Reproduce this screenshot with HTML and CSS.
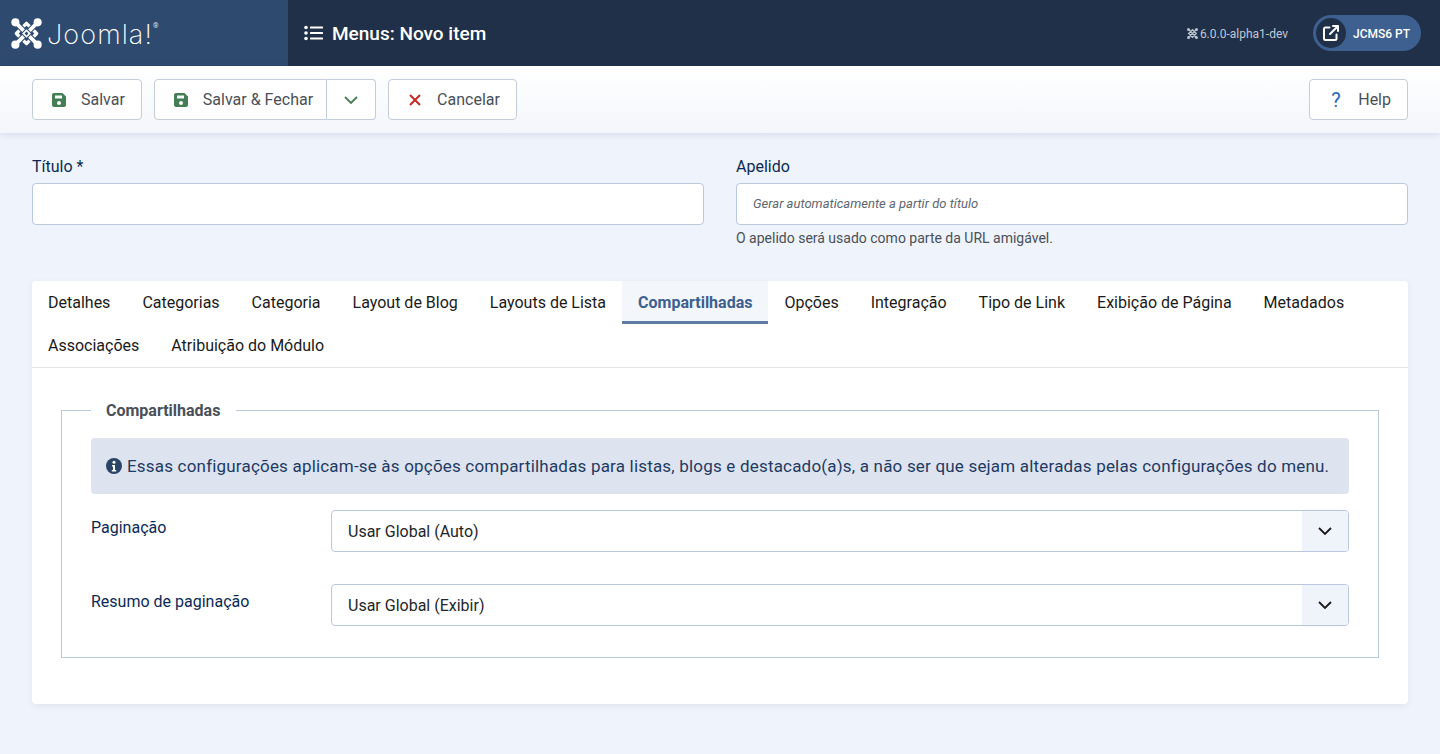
FILE: index.html
```html
<!DOCTYPE html>
<html lang="pt">
<head>
<meta charset="utf-8">
<title>Menus: Novo item</title>
<link rel="stylesheet" href="styles.css">
</head>
<body>
<header class="topbar">
  <div class="brand">
    <svg class="brand-mark" viewBox="0 0 32 32" width="31" height="31" aria-hidden="true">
      <g fill="none">
        <path class="hook" d="M16 5.500L26.500 16L16 26.500L5.500 16Z"/>
        <path class="case" d="M8 8L13 13M24 8L19 13M8 24L13 19M24 24L19 19"/>
        <path class="hook-butt" d="M4.500 4.500L13 13M27.500 4.500L19 13M4.500 27.500L13 19M27.500 27.500L19 19"/>
      </g>
      <g fill="#fff"><circle cx="4.500" cy="4.500" r="4.200"/><circle cx="27.500" cy="4.500" r="4.200"/><circle cx="4.500" cy="27.500" r="4.200"/><circle cx="27.500" cy="27.500" r="4.200"/><path d="M16 11.500L20.500 16L16 20.500L11.500 16Z"/></g>
      <path d="M16 14L18 16L16 18L14 16Z" fill="#2e4a6f"/>
    </svg>
    <span class="brand-name">Joomla!</span><span class="brand-reg">®</span>
  </div>
  <div class="topbar-main">
    <svg class="title-icon" viewBox="0 0 20 16" width="20" height="16" aria-hidden="true">
      <g fill="#fff"><circle cx="2" cy="2.500" r="1.800"/><circle cx="2" cy="8" r="1.800"/><circle cx="2" cy="13.500" r="1.800"/><rect x="6" y="1.500" width="13" height="2" rx=".5"/><rect x="6" y="7" width="13" height="2" rx=".5"/><rect x="6" y="12.500" width="13" height="2" rx=".5"/></g>
    </svg>
    <h1 class="page-title">Menus: Novo item</h1>
    <div class="topbar-right">
      <span class="version">
        <svg viewBox="0 0 32 32" width="11" height="11" aria-hidden="true"><g fill="none" stroke="#b9c3d0" stroke-width="4"><path d="M4 4L28 28M28 4L4 28M16 5L27 16L16 27L5 16Z"/></g><g fill="#b9c3d0"><circle cx="4.500" cy="4.500" r="4.500"/><circle cx="27.500" cy="4.500" r="4.500"/><circle cx="4.500" cy="27.500" r="4.500"/><circle cx="27.500" cy="27.500" r="4.500"/></g></svg>
        6.0.0-alpha1-dev
      </span>
      <a class="site-pill">
        <span class="site-icon">
          <svg viewBox="0 0 18 18" width="18" height="18" aria-hidden="true"><g fill="none" stroke="#fff" stroke-width="2" stroke-linecap="round" stroke-linejoin="round"><path d="M14.500 10.500v4a1.500 1.500 0 0 1-1.500 1.500H3.500A1.500 1.500 0 0 1 2 14.500V5a1.500 1.500 0 0 1 1.500-1.500h4"/><path d="M11 2h5v5M16 2L8 10"/></g></svg>
        </span>
        <span class="site-name">JCMS6 PT</span>
      </a>
    </div>
  </div>
</header>

<nav class="toolbar">
  <button class="btn btn-save">
    <svg class="save" viewBox="0 0 14 14" width="14" height="14" aria-hidden="true"><path fill="#457d54" fill-rule="evenodd" d="M2 0h8.500L14 3.500V12a2 2 0 0 1-2 2H2a2 2 0 0 1-2-2V2a2 2 0 0 1 2-2zM3 2.500v3h7v-3zM7 8a2 2 0 1 0 0 4 2 2 0 0 0 0-4z"/></svg>
    Salvar
  </button>
  <div class="btn-group">
    <button class="btn btn-save btn-main">
      <svg class="save" viewBox="0 0 14 14" width="14" height="14" aria-hidden="true"><path fill="#457d54" fill-rule="evenodd" d="M2 0h8.500L14 3.500V12a2 2 0 0 1-2 2H2a2 2 0 0 1-2-2V2a2 2 0 0 1 2-2zM3 2.500v3h7v-3zM7 8a2 2 0 1 0 0 4 2 2 0 0 0 0-4z"/></svg>
      Salvar &amp; Fechar
    </button>
    <button class="btn btn-caret" aria-label="Mais">
      <svg viewBox="0 0 16 10" width="16" height="10" aria-hidden="true"><path d="M2 2l6 6 6-6" fill="none" stroke="#457d54" stroke-width="1.800"/></svg>
    </button>
  </div>
  <button class="btn">
    <svg class="cancel" viewBox="0 0 12 12" width="12" height="12" aria-hidden="true"><path d="M1 1l10 10M11 1L1 11" fill="none" stroke="#c52827" stroke-width="2"/></svg>
    Cancelar
  </button>
  <button class="btn btn-help"><span class="help-mark">?</span> Help</button>
</nav>

<main class="content">
  <div class="title-row">
    <div class="field">
      <label class="field-label">Título *</label>
      <input class="input" type="text">
    </div>
    <div class="field">
      <label class="field-label">Apelido</label>
      <input class="input input-alias" type="text" placeholder="Gerar automaticamente a partir do título">
      <div class="hint">O apelido será usado como parte da URL amigável.</div>
    </div>
  </div>

  <section class="card">
    <div class="tabs">
      <a class="tab">Detalhes</a>
      <a class="tab">Categorias</a>
      <a class="tab">Categoria</a>
      <a class="tab">Layout de Blog</a>
      <a class="tab">Layouts de Lista</a>
      <a class="tab tab-active">Compartilhadas</a>
      <a class="tab">Opções</a>
      <a class="tab">Integração</a>
      <a class="tab">Tipo de Link</a>
      <a class="tab">Exibição de Página</a>
      <a class="tab">Metadados</a>
      <a class="tab">Associações</a>
      <a class="tab">Atribuição do Módulo</a>
    </div>
    <div class="panel">
      <fieldset class="options">
        <legend class="options-legend">Compartilhadas</legend>
        <div class="alert">
          <svg viewBox="0 0 16 16" width="16" height="16" aria-hidden="true"><circle cx="8" cy="8" r="8" fill="#2a4568"/><circle cx="8" cy="4.300" r="1.500" fill="#fff"/><path d="M6 7h3v5h1.200v1.500H5.800V12H7V8.500H6z" fill="#fff"/></svg>
          <span>Essas configurações aplicam-se às opções compartilhadas para listas, blogs e destacado(a)s, a não ser que sejam alteradas pelas configurações do menu.</span>
        </div>
        <div class="form-row">
          <label class="row-label">Paginação</label>
          <div class="select">
            <span class="select-value">Usar Global (Auto)</span>
            <span class="select-caret"><svg viewBox="0 0 16 10" width="16" height="10" aria-hidden="true"><path d="M2 2l6 6 6-6" fill="none" stroke="#1a1a1a" stroke-width="1.800"/></svg></span>
          </div>
        </div>
        <div class="form-row">
          <label class="row-label">Resumo de paginação</label>
          <div class="select">
            <span class="select-value">Usar Global (Exibir)</span>
            <span class="select-caret"><svg viewBox="0 0 16 10" width="16" height="10" aria-hidden="true"><path d="M2 2l6 6 6-6" fill="none" stroke="#1a1a1a" stroke-width="1.800"/></svg></span>
          </div>
        </div>
      </fieldset>
    </div>
  </section>
</main>
</body>
</html>
```

FILE: styles.css
```css
* { box-sizing: border-box; }
html, body { margin: 0; height: 100%; }
body {
  background: #eff3fb;
  color: #22262a;
  font-family: Roboto, "Liberation Sans", sans-serif;
  font-size: 16px;
  line-height: 24px;
  overflow: hidden;
}

.topbar { display: flex; height: 66px; background: #1f3048; color: #fff; }
.brand {
  display: flex; align-items: center;
  width: 288px; padding-left: 11px;
  background: #2e4a6f;
}
.case { stroke: #2e4a6f; stroke-width: 6; stroke-linecap: butt; }
.hook { stroke: #fff; stroke-width: 3.400; stroke-linejoin: round; }
.hook-butt { stroke: #fff; stroke-width: 3.800; stroke-linecap: butt; }
.brand-name {
  margin-left: 5px;
  padding-top: 3px;
  font-family: Inter, sans-serif;
  font-weight: 200;
  font-size: 27px;
  letter-spacing: 1.100px;
}
.brand-reg { align-self: flex-start; margin: 22px 0 0 0; font-size: 7px; line-height: 8px; color: #dfe5ee; }
.topbar-main { flex: 1; display: flex; align-items: center; padding: 0 19px 0 16px; }
.title-icon { margin-right: 8px; }
.page-title { margin: 0; padding-top: 1px; font-size: 19px; font-weight: 500; line-height: 24px; }
.topbar-right { margin-left: auto; display: flex; align-items: center; gap: 25px; }
.version { display: flex; align-items: center; gap: 2px; padding-top: 1px; font-size: 12px; color: #c0c8d3; }
.site-pill {
  display: flex; align-items: center;
  width: 108px; height: 36px; padding: 3px;
  background: #3d6090; border-radius: 18px;
}
.site-icon {
  display: flex; align-items: center; justify-content: center;
  width: 30px; height: 30px; border-radius: 50%;
  background: #1f3048;
}
.site-name { margin-left: 7px; padding-top: 1px; font-size: 12px; font-weight: 500; color: #fff; }

.toolbar {
  display: flex; gap: 12px;
  height: 67px; padding: 13px 32px;
  background: linear-gradient(180deg, #fff 0%, #f3f6fb 100%);
  box-shadow: 0 2px 6px rgba(40, 70, 120, .12);
  position: relative;
}
.btn {
  display: inline-flex; align-items: center;
  height: 41px; padding: 0 16px 0 20px;
  background: #fff;
  border: 1px solid #c3cddb;
  border-radius: 4px;
  color: #495057;
  font: inherit;
}
.btn-save { padding-left: 19px; }
.save { margin-right: 15px; }
.cancel { margin-right: 16px; }
.btn-group { display: flex; }
.btn-main { border-radius: 4px 0 0 4px; padding-right: 13px; }
.btn-caret { border-left: 0; border-radius: 0 4px 4px 0; width: 49px; padding: 0; justify-content: center; }
.btn-help { margin-left: auto; padding: 0 16px 0 21px; }
.help-mark { width: 9px; margin-right: 18px; color: #2a69b8; font-weight: 400; font-size: 20px; }

.content { padding: 21px 32px 0; }
.title-row { display: grid; grid-template-columns: 1fr 1fr; gap: 32px; height: 127px; }
.field-label { display: block; height: 29px; line-height: 26px; color: #0a2a55; }
.input {
  display: block; width: 100%; height: 42px;
  padding: 0 16px;
  background: #fff;
  border: 1px solid #b9c8dd;
  border-radius: 4px;
  font: inherit;
}
.input-alias { padding-bottom: 3px; }
.input-alias::placeholder { color: #5d6670; font-style: italic; font-size: 13px; opacity: 1; }
.hint { margin-top: 3px; font-size: 14px; line-height: 20px; color: #495057; }

.card {
  height: 423px;
  background: #fff;
  border-radius: 4px;
  box-shadow: 0 2px 6px rgba(40, 70, 120, .08);
}
.tabs {
  display: flex; flex-wrap: wrap;
  height: 87px;
  border-bottom: 1px solid #e2e4e8;
}
.tab { height: 43px; padding: 9px 16px; line-height: 25px; color: #1a1a1a; }
.tab-active {
  padding-bottom: 6px;
  background: #f3f6fa;
  border-bottom: 3px solid #5e7ca3;
  color: #3d6090;
  font-weight: 700;
}
.panel { padding: 32px 29px 0; }
.options {
  margin: 0; padding: 18px 29px 0;
  height: 258px;
  border: 1px solid #b9c8dd;
}
.options-legend { padding: 1px 16px 0 15px; font-weight: 700; font-size: 16px; color: #495057; line-height: 19px; }
.alert {
  display: flex; align-items: center; gap: 5px;
  height: 56px; padding: 0 15px;
  background: #dde4f0;
  border-radius: 4px;
  color: #1f3a63;
  font-size: 17px;
  letter-spacing: .19px;
  white-space: nowrap;
}
.form-row { display: flex; height: 74px; padding-top: 16px; }
.row-label { width: 240px; flex: none; height: 24px; line-height: 24px; margin-top: 6px; color: #0a2a55; }
.select {
  flex: 1; display: flex; align-items: center; justify-content: space-between;
  height: 42px; padding-left: 16px;
  background: #fff;
  border: 1px solid #b9c8dd;
  border-radius: 4px;
  overflow: hidden;
}
.select-value { padding-top: 1px; }
.select-caret {
  display: flex; align-items: center; justify-content: center;
  width: 46px; height: 100%;
  background: #eff3fa;
}
```
